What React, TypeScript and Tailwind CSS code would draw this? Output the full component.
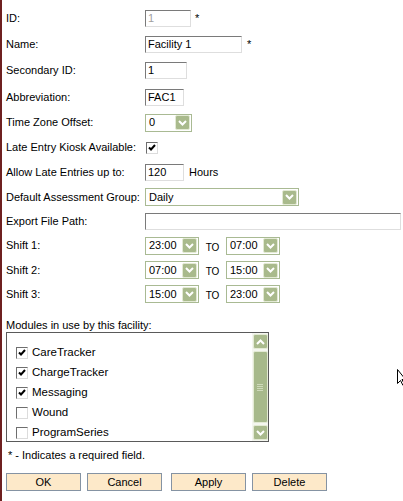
import React from 'react';

const Arrow = ({ up }: { up?: boolean }) => (
  <span className="flex h-[15px] w-[15px] shrink-0 items-center justify-center rounded-[2px] border border-[#e3ead4] bg-[#a9ba8c]">
    <svg width="9" height="6" viewBox="0 0 9 6">
      <path
        d={up ? 'M1 5L4.5 1.5L8 5' : 'M1 1L4.5 4.5L8 1'}
        stroke="white"
        strokeWidth="2"
        fill="none"
      />
    </svg>
  </span>
);

const Select = ({ value, className }: { value: string; className: string }) => (
  <div
    className={`flex h-[18px] items-center justify-between border border-[#a9ba93] bg-white pl-[3px] pr-px ${className}`}
  >
    <span>{value}</span>
    <Arrow />
  </div>
);

const Input = ({
  value,
  className,
  disabled,
}: {
  value?: string;
  className: string;
  disabled?: boolean;
}) => (
  <div
    className={`flex h-[17px] items-center border border-t-[#7a7a7a] border-l-[#7a7a7a] border-r-[#dedede] border-b-[#dedede] bg-white pl-[2px] ${
      disabled ? 'text-[#a0a0a0]' : ''
    } ${className}`}
  >
    {value}
  </div>
);

const Check = ({ checked }: { checked?: boolean }) => (
  <span className="flex h-[12px] w-[12px] shrink-0 items-center justify-center border border-t-[#6e6e6e] border-l-[#6e6e6e] border-r-[#dcdcdc] border-b-[#dcdcdc] bg-white">
    {checked && (
      <svg width="8" height="8" viewBox="0 0 8 8">
        <path d="M1 3.5L3 5.5L7 1" stroke="black" strokeWidth="2" fill="none" />
      </svg>
    )}
  </span>
);

const Row = ({ label, h, children }: { label: string; h: string; children: React.ReactNode }) => (
  <div className={`flex items-center ${h}`}>
    <div className="w-[139px] shrink-0">{label}</div>
    <div className="flex items-center">{children}</div>
  </div>
);

const Btn = ({ label, className }: { label: string; className: string }) => (
  <button
    className={`h-[18px] w-[75px] border border-[#8593a3] bg-[#fde9c9] text-[11px] leading-none text-black ${className}`}
  >
    {label}
  </button>
);

const modules = [
  { name: 'CareTracker', on: true },
  { name: 'ChargeTracker', on: true },
  { name: 'Messaging', on: true },
  { name: 'Wound', on: false },
  { name: 'ProgramSeries', on: false },
];

export default function App() {
  return (
    <div className="relative h-[501px] w-[403px] overflow-hidden border-l-2 border-[#6e2020] bg-white pl-[4px] pt-[5px] font-['Liberation_Sans',Arial,sans-serif] text-[11px] text-black">
      <Row label="ID:" h="h-[26px]">
        <Input value="1" disabled className="w-[46px] border-[#b0b0b0]" />
        <span className="ml-[4px]">*</span>
      </Row>
      <Row label="Name:" h="h-[26px]">
        <Input value="Facility 1" className="w-[97px]" />
        <span className="ml-[5px]">*</span>
      </Row>
      <Row label="Secondary ID:" h="h-[27px]">
        <Input value="1" className="w-[42px]" />
      </Row>
      <Row label="Abbreviation:" h="h-[26px]">
        <Input value="FAC1" className="w-[39px]" />
      </Row>
      <Row label="Time Zone Offset:" h="h-[25px]">
        <Select value="0" className="w-[47px]" />
      </Row>
      <Row label="Late Entry Kiosk Available:" h="h-[25px]">
        <span className="ml-px">
          <Check checked />
        </span>
      </Row>
      <Row label="Allow Late Entries up to:" h="h-[25px]">
        <Input value="120" className="w-[39px]" />
        <span className="ml-[5px]">Hours</span>
      </Row>
      <Row label="Default Assessment Group:" h="h-[24px]">
        <Select value="Daily" className="w-[154px]" />
      </Row>
      <Row label="Export File Path:" h="h-[24px]">
        <Input className="w-[256px]" />
      </Row>
      {[
        ['Shift 1:', '23:00', '07:00', 'h-[25px]'],
        ['Shift 2:', '07:00', '15:00', 'h-[24px]'],
        ['Shift 3:', '15:00', '23:00', 'h-[24px]'],
      ].map(([label, from, to, h]) => (
        <Row key={label} label={label} h={h}>
          <Select value={from} className="w-[54px]" />
          <span className="w-[27px] pt-[3px] text-center text-[10px]">TO</span>
          <Select value={to} className="w-[54px]" />
        </Row>
      ))}

      <div className="mt-[13px] leading-[13px]">Modules in use by this facility:</div>
      <div className="flex h-[110px] w-[263px] overflow-hidden border border-[#5a5a5a]">
        <div className="flex flex-1 flex-col pl-[9px] pt-[10px]">
          {modules.map((m) => (
            <div key={m.name} className="flex h-[20px] shrink-0 items-center gap-[4px]">
              <Check checked={m.on} />
              <span className="text-[11.5px]">{m.name}</span>
            </div>
          ))}
        </div>
        <div className="flex w-[16px] flex-col items-center bg-[#f4f6ef] py-px">
          <Arrow up />
          <div className="my-[2px] flex w-[15px] flex-1 items-center justify-center rounded-[2px] border border-[#e3ead4] bg-[#a7b98b]">
            <div className="flex flex-col gap-[1px]">
              <span className="h-px w-[6px] bg-[#cfdabb]" />
              <span className="h-px w-[6px] bg-[#cfdabb]" />
              <span className="h-px w-[6px] bg-[#cfdabb]" />
              <span className="h-px w-[6px] bg-[#cfdabb]" />
            </div>
          </div>
          <Arrow />
        </div>
      </div>
      <div className="mt-[7px] pl-[2px] leading-[13px]">* - Indicates a required field.</div>
      <div className="mt-[11px] flex">
        <Btn label="OK" className="" />
        <Btn label="Cancel" className="ml-[6px]" />
        <Btn label="Apply" className="ml-[9px]" />
        <Btn label="Delete" className="ml-[6px]" />
      </div>

      <svg className="absolute left-[395px] top-[369px]" width="9" height="18" viewBox="0 0 9 18">
        <path d="M0.5 0.5V14.5L3.5 11.5L6 16.5L7.5 15.5L5 10.5H8.5Z" fill="white" stroke="black" strokeWidth="1" />
      </svg>
    </div>
  );
}
